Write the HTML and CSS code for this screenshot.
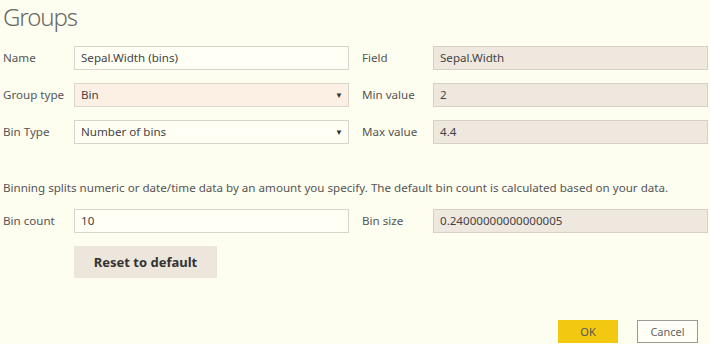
FILE: index.html
```html
<!DOCTYPE html>
<html lang="en">
<head>
  <meta charset="UTF-8">
  <title>Groups</title>
  <link rel="stylesheet" href="styles.css">
</head>
<body>
  <div class="dialog">
    <h1 class="title">Groups</h1>

    <div class="fields">
      <label>Name</label>
      <div class="box">Sepal.Width (bins)</div>
      <label class="right">Field</label>
      <div class="box locked">Sepal.Width</div>

      <label>Group type</label>
      <div class="box select active">Bin <span class="arrow">&#9660;</span></div>
      <label class="right">Min value</label>
      <div class="box locked">2</div>

      <label>Bin Type</label>
      <div class="box select">Number of bins <span class="arrow">&#9660;</span></div>
      <label class="right">Max value</label>
      <div class="box locked">4.4</div>
    </div>

    <p class="info">Binning splits numeric or date/time data by an amount you specify. The default bin count is calculated based on your data.</p>

    <div class="fields">
      <label>Bin count</label>
      <div class="box">10</div>
      <label class="right">Bin size</label>
      <div class="box locked">0.24000000000000005</div>
    </div>

    <div class="reset-row">
      <button class="reset">Reset to default</button>
    </div>

    <div class="footer">
      <button class="ok">OK</button>
      <button class="cancel">Cancel</button>
    </div>
  </div>
</body>
</html>
```

FILE: styles.css
```css
body {
  margin: 0;
  background: #fdfdf0;
  font-family: "Noto Sans", "Open Sans", sans-serif;
  color: #444;
}

.dialog {
  width: 710px;
  height: 344px;
  box-sizing: border-box;
  padding: 0 2px 0 3px;
}

.title {
  margin: 0;
  height: 46px;
  font-size: 24px;
  font-weight: 300;
  color: #6a6a66;
  line-height: 33px;
  letter-spacing: -1.1px;
}

.fields {
  display: grid;
  grid-template-columns: 71px 275px 84px 275px;
  grid-auto-rows: 24px;
  row-gap: 13px;
}

.fields label {
  font-size: 11.6px;
  line-height: 24px;
  color: #555;
}

.fields label.right {
  padding-left: 13px;
}

.box {
  box-sizing: border-box;
  border: 1px solid #d9d5ca;
  background: #fffff6;
  font-size: 11.6px;
  line-height: 22px;
  padding: 0 6px;
  color: #444;
  position: relative;
}

.box.locked {
  background: #efe8df;
  border-color: #d8d0c4;
}

.box.active {
  background: #fcefe4;
}

.select .arrow {
  position: absolute;
  right: 5px;
  top: 0;
  font-size: 8px;
  color: #333;
}

.info {
  margin: 36px 0 13px;
  font-size: 11.6px;
  line-height: 16px;
  color: #555;
}

.reset-row {
  padding-left: 71px;
  margin-top: 13px;
}

.reset {
  width: 143px;
  height: 32px;
  border: none;
  background: #ede6dc;
  font-family: inherit;
  font-size: 13px;
  font-weight: bold;
  color: #333;
}

.footer {
  display: flex;
  justify-content: flex-end;
  gap: 19px;
  margin-top: 42px;
  padding-right: 10px;
}

.footer button {
  height: 23px;
  font-family: inherit;
  font-size: 11px;
  padding: 0;
}

.ok {
  width: 60px;
  border: none;
  background: #f2c811;
  color: #555;
}

.cancel {
  width: 61px;
  border: 1px solid #9a9a96;
  background: #fefef6;
  color: #666;
}
```
